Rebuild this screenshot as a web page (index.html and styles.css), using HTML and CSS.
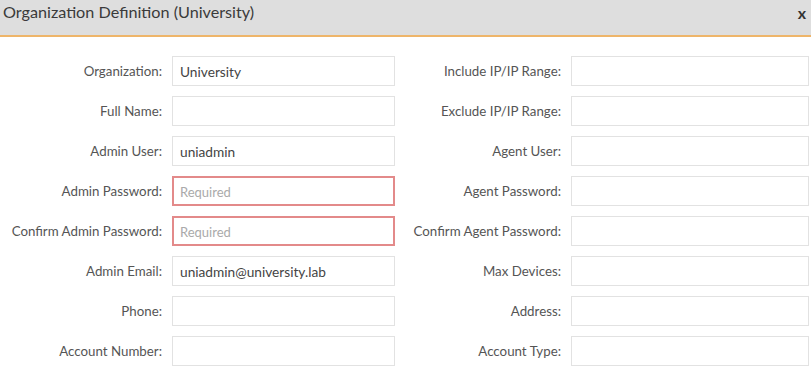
FILE: index.html
```html
<!DOCTYPE html>
<html>
  <head>
    <title>Organization Definition</title>
    <link rel="stylesheet" href="styles.css">
  </head>
  <body>
    <div class="dialog">
      <div class="dialog-header">
        <span class="dialog-title">Organization Definition (University)</span>
        <span class="close">x</span>
      </div>

      <div class="form-grid">
        <label>Organization:</label>
        <input type="text" value="University" />
        <label>Include IP/IP Range:</label>
        <input type="text" />

        <label>Full Name:</label>
        <input type="text" />
        <label>Exclude IP/IP Range:</label>
        <input type="text" />

        <label>Admin User:</label>
        <input type="text" value="uniadmin" />
        <label>Agent User:</label>
        <input type="text" />

        <label>Admin Password:</label>
        <input type="password" class="invalid" placeholder="Required" />
        <label>Agent Password:</label>
        <input type="password" />

        <label>Confirm Admin Password:</label>
        <input type="password" class="invalid" placeholder="Required" />
        <label>Confirm Agent Password:</label>
        <input type="password" />

        <label>Admin Email:</label>
        <input type="text" value="uniadmin@university.lab" />
        <label>Max Devices:</label>
        <input type="text" />

        <label>Phone:</label>
        <input type="text" />
        <label>Address:</label>
        <input type="text" />

        <label>Account Number:</label>
        <input type="text" />
        <label>Account Type:</label>
        <input type="text" />
      </div>
    </div>
  </body>
</html>
```

FILE: styles.css
```css
body {
  margin: 0;
  font-family: Lato, "Open Sans", Arial, sans-serif;
  background: #fff;
  box-sizing: border-box;
}
* {
  box-sizing: inherit;
}
.dialog {
  width: 811px;
  height: 369px;
  overflow: hidden;
}
.dialog-header {
  display: flex;
  justify-content: space-between;
  align-items: flex-start;
  height: 37px;
  padding: 2px 5px 0 3px;
  background: #dedede;
  border-bottom: 2px solid #eeb56a;
}
.dialog-title {
  font-size: 16.2px;
  color: #3a3a3a;
}
.close {
  font-size: 16px;
  font-weight: bold;
  color: #333;
  margin-top: 1px;
}
.form-grid {
  display: grid;
  grid-template-columns: 162px 223px 156px 238px;
  grid-auto-rows: 30px;
  column-gap: 10px;
  row-gap: 10px;
  padding-top: 19px;
}
label {
  display: flex;
  align-items: center;
  justify-content: flex-end;
  font-size: 13.3px;
  color: #555;
}
input {
  height: 30px;
  padding: 0 7px;
  border: 1px solid #e2e2e2;
  font-family: Lato, "Open Sans", Arial, sans-serif;
  font-size: 13.7px;
  color: #444;
  background: #fff;
  outline: none;
}
input::placeholder {
  color: #aaa;
  font-size: 13px;
}
input.invalid {
  border: 2px solid #e38a8a;
  padding: 0 6px;
}
```
